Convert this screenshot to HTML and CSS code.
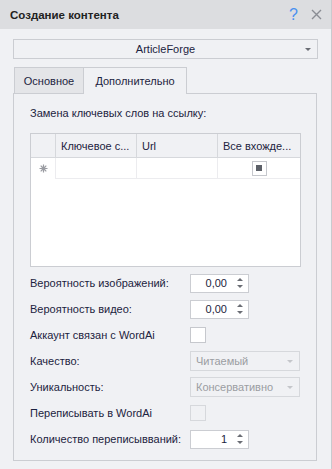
FILE: index.html
```html
<!DOCTYPE html>
<html lang="ru">
<head>
    <meta charset="UTF-8">
    <title>Создание контента</title>
    <link rel="stylesheet" href="styles.css">
</head>
<body>
    <div class="window">
        <!-- Title bar -->
        <div class="titlebar">
            <span class="title">Создание контента</span>
            <span class="title-btns">
                <span class="help">?</span>
                <svg class="close" width="11" height="11" viewBox="0 0 11 11">
                    <path d="M1 1 L10 10 M10 1 L1 10" stroke="#8a8d94" stroke-width="1.4"/>
                </svg>
            </span>
        </div>

        <div class="content">
            <div class="combo main-combo">
                <span class="combo-text">ArticleForge</span>
                <span class="arrow"></span>
            </div>

            <!-- Tabs -->
            <div class="tabs">
                <div class="tab first">Основное</div>
                <div class="tab active">Дополнительно</div>
            </div>

            <div class="panel">
                <div class="section-label">Замена ключевых слов на ссылку:</div>

                <div class="grid">
                    <div class="grid-head">
                        <div class="cell ind"></div>
                        <div class="cell c1">Ключевое с...</div>
                        <div class="cell c2">Url</div>
                        <div class="cell c3">Все вхожде...</div>
                    </div>
                    <div class="grid-row">
                        <div class="cell ind">
                            <svg width="9" height="9" viewBox="0 0 9 9">
                                <path d="M4.5 0.5 V8.5 M0.5 4.5 H8.5 M1.7 1.7 L7.3 7.3 M7.3 1.7 L1.7 7.3" stroke="#9a9ca2" stroke-width="1.2"/>
                                <circle cx="4.5" cy="4.5" r="2" fill="#9a9ca2"/>
                            </svg>
                        </div>
                        <div class="cell c1"></div>
                        <div class="cell c2"></div>
                        <div class="cell c3"><span class="grid-check"><span></span></span></div>
                    </div>
                </div>

                <!-- Options -->
                <div class="form">
                    <div class="row">
                        <label>Вероятность изображений:</label>
                        <div class="spin"><span class="spin-val">0,00</span><span class="spin-btns"><i class="up"></i><i class="down"></i></span></div>
                    </div>
                    <div class="row">
                        <label>Вероятность видео:</label>
                        <div class="spin"><span class="spin-val">0,00</span><span class="spin-btns"><i class="up"></i><i class="down"></i></span></div>
                    </div>
                    <div class="row">
                        <label>Аккаунт связан с WordAi</label>
                        <span class="check"></span>
                    </div>
                    <div class="row">
                        <label>Качество:</label>
                        <div class="combo disabled"><span class="combo-text">Читаемый</span><span class="arrow"></span></div>
                    </div>
                    <div class="row">
                        <label>Уникальность:</label>
                        <div class="combo disabled"><span class="combo-text">Консервативно</span><span class="arrow"></span></div>
                    </div>
                    <div class="row">
                        <label>Переписывать в WordAi</label>
                        <span class="check disabled"></span>
                    </div>
                    <div class="row">
                        <label>Количество переписывваний:</label>
                        <div class="spin"><span class="spin-val">1</span><span class="spin-btns"><i class="up"></i><i class="down"></i></span></div>
                    </div>
                </div>
            </div>
        </div>
    </div>
</body>
</html>
```

FILE: styles.css
```css
* {
    margin: 0;
    padding: 0;
    box-sizing: border-box;
}

html, body {
    width: 100%;
    height: 100%;
    overflow: hidden;
}

body {
    font-family: 'Liberation Sans', Arial, sans-serif;
    font-size: 11px;
    color: #1c2340;
    background: #f0f1f4;
}

.window {
    height: 469px;
    border-right: 1px solid #c9cace;
}

/* Title bar */
.titlebar {
    height: 29px;
    background: #dcdde0;
    display: flex;
    align-items: center;
    justify-content: space-between;
    padding: 0 9px 0 10px;
}

.title {
    font-weight: bold;
    font-size: 11.5px;
    color: #222;
}

.title-btns {
    display: flex;
    align-items: center;
    gap: 13px;
}

.help {
    color: #4a90f0;
    font-size: 16px;
}

/* Content */
.content {
    padding: 10px 14px 0 13px;
}

.combo {
    position: relative;
    height: 20px;
    border: 1px solid #cbcdd2;
    display: flex;
    align-items: center;
}

.main-combo {
    width: 305px;
    justify-content: center;
}

.arrow {
    position: absolute;
    right: 6px;
    top: 8px;
    width: 0;
    height: 0;
    border-left: 3px solid transparent;
    border-right: 3px solid transparent;
    border-top: 3px solid #6a6d74;
}

.combo.disabled {
    width: 110px;
    border-color: #d6d8dc;
    color: #9b9da2;
    padding-left: 5px;
}

.combo.disabled .arrow {
    border-top-color: #c4c6ca;
}

/* Tabs */
.tabs {
    display: flex;
    align-items: flex-end;
    margin-top: 7px;
    padding-left: 1px;
    height: 27px;
}

.tab {
    height: 26px;
    display: flex;
    align-items: center;
    justify-content: center;
    border: 1px solid #cbcdd2;
    border-bottom: none;
    background: #e4e5e8;
}

.tab.first {
    width: 70px;
}

.tab.active {
    width: 103px;
    height: 27px;
    background: #f0f1f4;
    border-left: none;
    position: relative;
    top: 1px;
    z-index: 1;
}

.panel {
    width: 304px;
    height: 368px;
    border: 1px solid #cbcdd2;
    padding: 13px 15px 0 16px;
}

.section-label {
    height: 26px;
}

/* Grid */
.grid {
    width: 271px;
    height: 134px;
    border: 1px solid #cbcdd2;
    background: #fff;
}

.grid-head,
.grid-row {
    display: flex;
}

.grid-head {
    height: 24px;
    background: #f0f1f4;
    border-bottom: 1px solid #d6d8dc;
}

.grid-row {
    height: 21px;
}

.cell {
    display: flex;
    align-items: center;
    padding-left: 5px;
    white-space: nowrap;
    overflow: hidden;
}

.grid-head .cell {
    border-right: 1px solid #d6d8dc;
}

.grid-head .cell:last-child {
    border-right: none;
}

.grid-row .cell {
    border-right: 1px solid #ececef;
    border-bottom: 1px solid #ececef;
}

.grid-row .cell:last-child {
    border-right: none;
}

.grid-row .ind {
    border-bottom: none;
    justify-content: center;
    padding-left: 0;
}

.ind { width: 25px; }
.c1 { width: 81px; }
.c2 { width: 81px; }
.c3 { flex: 1; }

.grid-row .c3 {
    justify-content: center;
    padding-left: 0;
}

.grid-check {
    width: 15px;
    height: 15px;
    border: 1px solid #c6c8cd;
    display: flex;
    align-items: center;
    justify-content: center;
}

.grid-check span {
    width: 6px;
    height: 6px;
    background: #5c6068;
}

/* Form rows */
.form {
    margin-top: 3px;
}

.row {
    height: 26px;
    display: flex;
    align-items: center;
}

.row label {
    width: 160px;
    white-space: nowrap;
}

.spin {
    width: 59px;
    height: 19px;
    border: 1px solid #cbcdd2;
    background: #fff;
    display: flex;
    align-items: center;
}

.spin-val {
    flex: 1;
    text-align: right;
    padding-right: 4px;
}

.spin-btns {
    width: 17px;
    display: flex;
    flex-direction: column;
    align-items: center;
    gap: 4px;
}

.spin-btns i {
    width: 0;
    height: 0;
    border-left: 3px solid transparent;
    border-right: 3px solid transparent;
}

.spin-btns .up {
    border-bottom: 3px solid #6a6d74;
}

.spin-btns .down {
    border-top: 3px solid #6a6d74;
}

.check {
    width: 16px;
    height: 16px;
    border: 1px solid #c6c8cd;
    background: #fff;
}

.check.disabled {
    background: #f0f1f4;
    border-color: #d6d8dc;
}
```
